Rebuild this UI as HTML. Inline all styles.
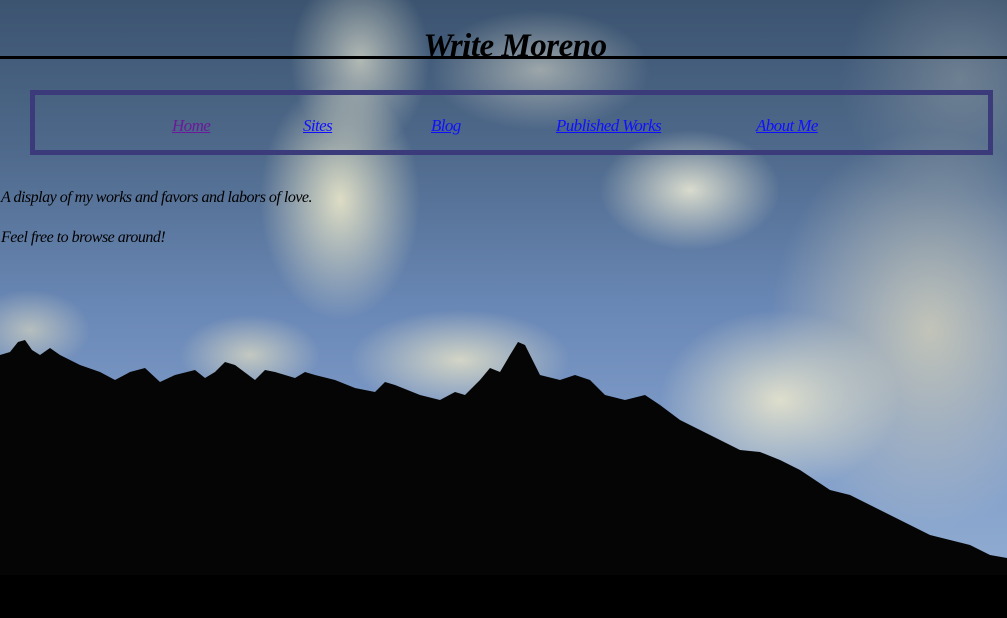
<!DOCTYPE html>
<html><head><meta charset="utf-8"><style>
html,body{margin:0;padding:0;width:1007px;height:618px;overflow:hidden;background:#000;}
#bg{position:absolute;left:0;top:0;width:1007px;height:618px;
background:
radial-gradient(ellipse 80px 120px at 340px 200px,rgba(245,240,205,.85),rgba(245,240,205,0) 100%),
radial-gradient(ellipse 70px 90px at 360px 60px,rgba(225,225,205,.7),rgba(225,225,205,0) 100%),
radial-gradient(ellipse 90px 60px at 690px 190px,rgba(240,238,215,.85),rgba(240,238,215,0) 100%),
radial-gradient(ellipse 110px 60px at 540px 70px,rgba(215,215,200,.6),rgba(215,215,200,0) 100%),
radial-gradient(ellipse 110px 50px at 460px 360px,rgba(235,230,200,.8),rgba(235,230,200,0) 100%),
radial-gradient(ellipse 70px 40px at 250px 355px,rgba(230,225,195,.7),rgba(230,225,195,0) 100%),
radial-gradient(ellipse 60px 40px at 30px 330px,rgba(230,225,195,.6),rgba(230,225,195,0) 100%),
radial-gradient(ellipse 120px 90px at 780px 400px,rgba(240,235,205,.85),rgba(240,235,205,0) 100%),
radial-gradient(ellipse 160px 200px at 930px 330px,rgba(215,210,185,.8),rgba(215,210,185,0) 100%),
radial-gradient(ellipse 120px 120px at 960px 80px,rgba(150,160,165,.5),rgba(150,160,165,0) 100%),
linear-gradient(180deg,#3c5470 0%,#4f6a8c 25%,#6a88b6 50%,#7e9bc8 70%,#8eaad0 90%);}
svg{position:absolute;left:0;top:0}
h1{position:absolute;left:0;top:28px;width:1030px;margin:0;text-align:center;font-family:"Liberation Serif",serif;font-style:italic;font-weight:bold;font-size:33px;color:#000;letter-spacing:-0.5px}
#hr{position:absolute;left:0;top:56px;width:1007px;height:3px;background:#000}
#nav{position:absolute;left:30px;top:90px;width:953px;height:55px;border:5px solid #3b3a7a;}
#nav a{position:absolute;top:21px;font-family:"Liberation Serif",serif;font-style:italic;font-size:17px;color:#1010ff;text-decoration:underline;letter-spacing:-0.6px}
p{position:absolute;left:1px;margin:0;font-family:"Liberation Serif",serif;font-style:italic;font-size:16px;color:#000;letter-spacing:-0.5px}
</style></head><body>
<div id="bg"></div>
<svg width="1007" height="618" viewBox="0 0 1007 618">
<polygon fill="#050505" points="0,618 0,355 10,352 18,342 25,340 32,350 40,355 50,348 60,355 80,365 100,372 115,380 130,372 145,368 160,382 175,375 195,370 205,378 215,372 225,362 235,365 255,380 265,370 275,372 295,378 305,372 315,375 335,380 355,388 375,392 385,382 395,385 420,395 440,400 455,392 465,395 480,380 490,368 500,372 510,355 518,342 525,345 540,375 560,380 575,375 590,380 605,395 625,400 645,395 660,405 680,420 700,430 720,440 740,450 760,452 780,460 800,470 815,480 830,490 850,495 870,505 890,515 910,525 930,535 950,540 970,545 990,555 1007,558 1007,618"/>
<rect x="0" y="575" width="1007" height="43" fill="#000"/>
</svg>
<h1>Write Moreno</h1>
<div id="hr"></div>
<div id="nav">
<a style="left:137px;color:#6a1a9a">Home</a>
<a style="left:268px">Sites</a>
<a style="left:396px">Blog</a>
<a style="left:521px">Published Works</a>
<a style="left:721px">About Me</a>
</div>
<p style="top:189px">A display of my works and favors and labors of love.</p>
<p style="top:229px">Feel free to browse around!</p>
</body></html>
